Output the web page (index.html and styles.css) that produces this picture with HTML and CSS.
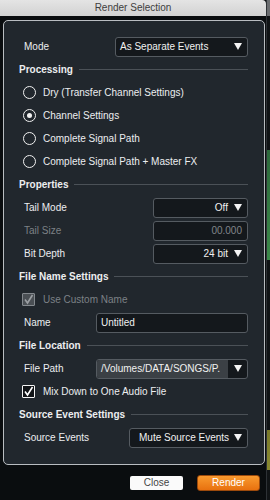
FILE: index.html
```html
<!DOCTYPE html>
<html>
<head>
  <meta name="viewport" content="width=device-width, initial-scale=1">
  <title>Render Selection</title>
  <link rel="stylesheet" href="styles.css">
</head>
<body>
  <div class="window">
    <header class="titlebar">Render Selection</header>
    <section class="panel">
      <div class="row">
        <span class="label">Mode</span>
        <div class="select mode-select"><span>As Separate Events</span><span class="arrow"></span></div>
      </div>

      <div class="heading">Processing</div>
      <div class="row option"><span class="radio"></span>Dry (Transfer Channel Settings)</div>
      <div class="row option"><span class="radio checked"></span>Channel Settings</div>
      <div class="row option"><span class="radio"></span>Complete Signal Path</div>
      <div class="row option"><span class="radio"></span>Complete Signal Path + Master FX</div>

      <div class="heading">Properties</div>
      <div class="row">
        <span class="label">Tail Mode</span>
        <div class="select short-select align-end"><span>Off</span><span class="arrow"></span></div>
      </div>
      <div class="row disabled">
        <span class="label">Tail Size</span>
        <div class="select short-select align-end"><span class="value">00.000</span></div>
      </div>
      <div class="row">
        <span class="label">Bit Depth</span>
        <div class="select short-select align-end"><span>24 bit</span><span class="arrow"></span></div>
      </div>

      <div class="heading">File Name Settings</div>
      <div class="row option disabled">
        <span class="checkbox">
          <svg width="11" height="11" viewBox="0 0 11 11"><path d="M2 5.5 L4.5 9 L9.5 1" fill="none" stroke="currentColor" stroke-width="1.6"/></svg>
        </span>Use Custom Name
      </div>
      <div class="row">
        <span class="label">Name</span>
        <div class="select wide-select"><span>Untitled</span></div>
      </div>

      <div class="heading">File Location</div>
      <div class="row">
        <span class="label">File Path</span>
        <div class="select wide-select path-select">
          <span class="path">/Volumes/DATA/SONGS/P.</span><span class="path-btn"><span class="arrow"></span></span>
        </div>
      </div>
      <div class="row option">
        <span class="checkbox on">
          <svg width="11" height="11" viewBox="0 0 11 11"><path d="M2 5.5 L4.5 9 L9.5 1" fill="none" stroke="currentColor" stroke-width="1.6"/></svg>
        </span>Mix Down to One Audio File
      </div>

      <div class="heading">Source Event Settings</div>
      <div class="row">
        <span class="label">Source Events</span>
        <div class="select source-select"><span>Mute Source Events</span><span class="arrow"></span></div>
      </div>
    </section>
    <footer class="buttons">
      <button type="button" class="btn-close">Close</button>
      <button type="button" class="btn-render">Render</button>
    </footer>
  </div>
  <div class="backdrop"></div>
</body>
</html>
```

FILE: styles.css
```css
html {
  height: 100%;
}

body {
  margin: 0;
  height: 100%;
  display: flex;
  font-family: "Liberation Sans", Arial, sans-serif;
  font-size: 10px;
  color: #eceef0;
  background-color: #0a0d0f;
  overflow: hidden;
}

.window {
  width: 266px;
  display: flex;
  flex-direction: column;
}

.backdrop {
  flex: 1;
  border-left: 1px solid #2e3236;
  background: linear-gradient(#6b6d70 0, #6b6d70 16px, #111416 16px, #111416 150px, #2d6a3c 150px, #3c8a4a 260px, #111416 260px, #111416 430px, #7a7a2a 430px, #8a8a30 470px, #111416 470px);
}

.titlebar {
  height: 16px;
  line-height: 16px;
  text-align: center;
  color: #3e3e3e;
  background: linear-gradient(#e4e4e4, #d2d2d2);
  border-top-right-radius: 4px;
}

.panel {
  margin: 4px 0 0 3px;
  width: 262px;
  height: 445px;
  box-sizing: border-box;
  padding: 14px 16px 0 20px;
  border: 1px solid #b9bdc1;
  border-radius: 5px;
  background-color: #21272d;
}

.row {
  height: 23px;
  display: flex;
  align-items: center;
  justify-content: space-between;
}

.option {
  justify-content: flex-start;
}

.disabled {
  color: #7c8186;
}

.heading {
  height: 23px;
  margin-left: -5px;
  display: flex;
  align-items: center;
  font-weight: bold;
  color: #eceef0;
}

.heading::after {
  content: "";
  flex: 1;
  height: 1px;
  margin-left: 6px;
  background-color: #4b5157;
}

.select {
  height: 20px;
  box-sizing: border-box;
  display: flex;
  align-items: center;
  justify-content: space-between;
  padding: 0 5px 0 4px;
  border: 1px solid #555b61;
  border-radius: 3px;
  background-color: #14181c;
  color: #f0f0f0;
}

.mode-select {
  width: 133px;
}

.short-select {
  width: 95px;
}

.align-end {
  justify-content: flex-end;
  gap: 6px;
}

.wide-select {
  width: 152px;
}

.source-select {
  width: 119px;
  padding-left: 9px;
}

.value {
  color: #80858a;
}

.arrow {
  width: 0;
  height: 0;
  border-left: 4px solid transparent;
  border-right: 4px solid transparent;
  border-top: 7px solid #f4f4f4;
}

.path-select {
  padding: 0;
  overflow: hidden;
}

.path {
  flex: 1;
  height: 100%;
  display: flex;
  align-items: center;
  padding-left: 4px;
  background-color: #3b4045;
}

.path-btn {
  width: 19px;
  display: flex;
  justify-content: center;
}

.radio {
  width: 13px;
  height: 13px;
  box-sizing: border-box;
  margin: 0 7px 0 -1px;
  border: 1.5px solid #f2f2f2;
  border-radius: 50%;
  display: flex;
  align-items: center;
  justify-content: center;
}

.radio.checked::after {
  content: "";
  width: 5px;
  height: 5px;
  border-radius: 50%;
  background-color: #f2f2f2;
}

.checkbox {
  width: 13px;
  height: 13px;
  box-sizing: border-box;
  margin: 0 8px 0 -2px;
  border: 1px solid #84898e;
  border-radius: 1px;
  background-color: #4a4f54;
  color: #9a9ea2;
  display: flex;
  align-items: center;
  justify-content: center;
}

.checkbox.on {
  border: 1.5px solid #f4f4f4;
  background-color: #111417;
  color: #ffffff;
}

.buttons {
  flex: 1;
  display: flex;
  align-items: center;
  justify-content: flex-end;
  gap: 14px;
  padding-right: 6px;
}

.buttons button {
  font-family: "Liberation Sans", Arial, sans-serif;
  font-size: 10px;
  padding: 0;
  cursor: pointer;
}

.btn-close {
  width: 53px;
  height: 14px;
  border: none;
  border-radius: 2px;
  background-color: #fafafa;
  color: #444;
}

.btn-render {
  width: 63px;
  height: 16px;
  border: 1px solid #9c4a0c;
  border-radius: 3px;
  background: linear-gradient(#f99a2e, #e8710f);
  color: #ffffff;
}
```
